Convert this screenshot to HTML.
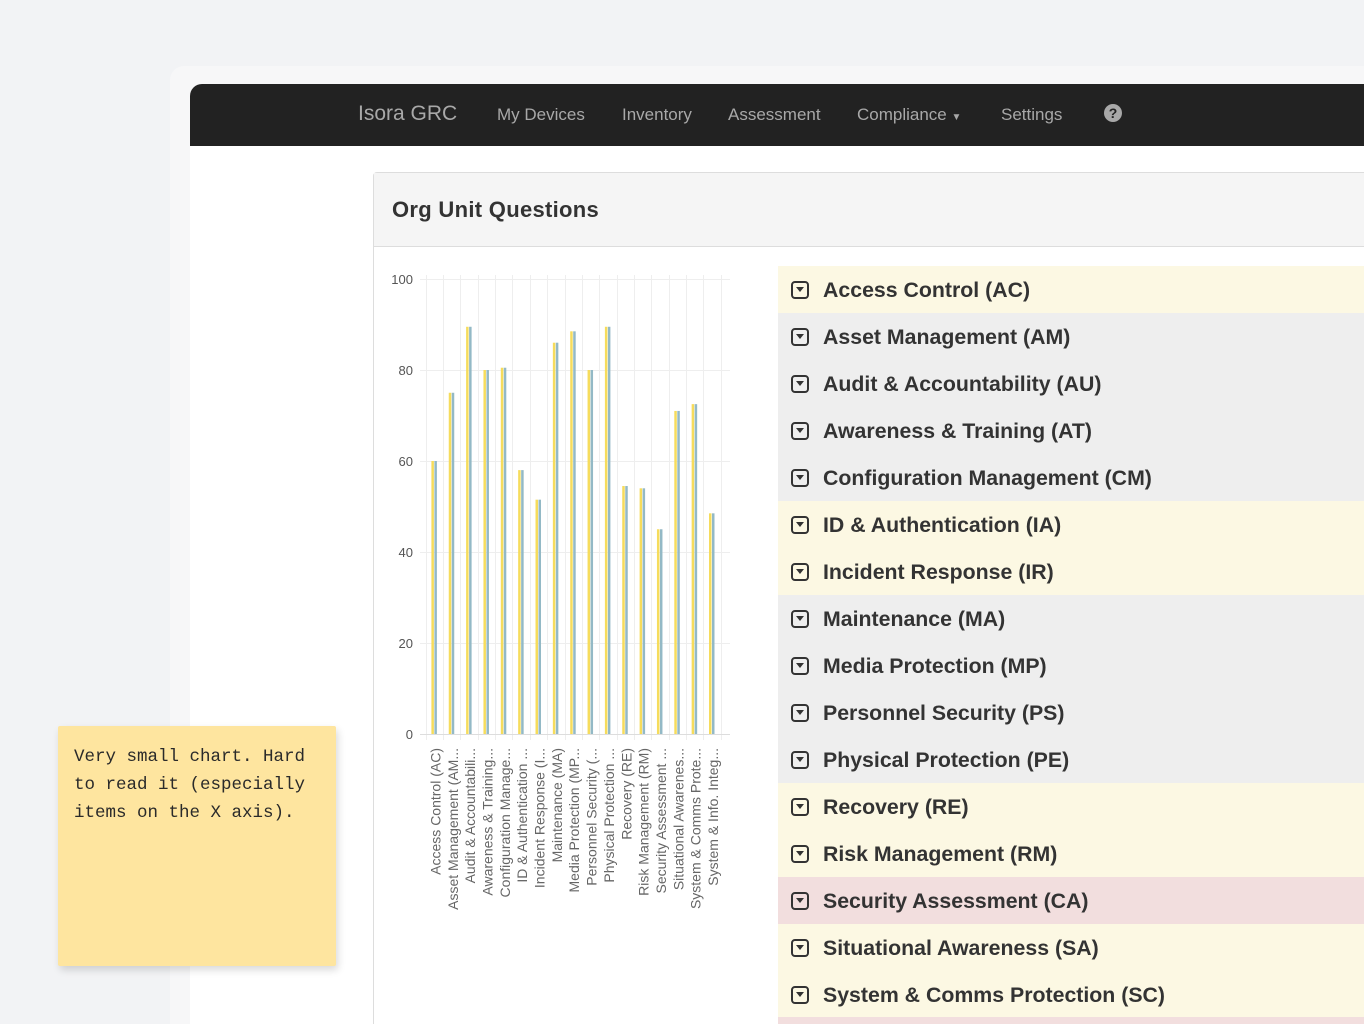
<!DOCTYPE html>
<html><head><meta charset="utf-8"><style>
*{margin:0;padding:0;box-sizing:border-box}
html,body{width:1364px;height:1024px;overflow:hidden}
body{background:#f2f3f5;font-family:"Liberation Sans",sans-serif;position:relative}
.frame{position:absolute;left:170px;top:66px;width:1194px;height:958px;background:#f7f7f8;border-radius:14px 0 0 0}
.win{position:absolute;left:190px;top:84px;width:1174px;height:940px;background:#fff;border-radius:12px 0 0 0;overflow:hidden}
.nav{position:absolute;left:0;top:0;right:0;height:62px;background:#222}
.nav span{position:absolute;top:21px;color:#a8a8a8;font-size:17px}
.panel{position:absolute;left:183px;top:88px;width:1020px;height:900px;border:1px solid #ddd;border-radius:4px 0 0 0}
.ph{height:74px;background:#f5f5f5;border-bottom:1px solid #ddd;padding:24px 0 0 18px;font-weight:bold;font-size:22px;color:#333;letter-spacing:0.3px}
.row{position:absolute;left:778px;width:600px;height:47px;font-weight:bold;font-size:21.3px;color:#333;padding:12px 0 0 45px}
.row i{position:absolute;left:13px;top:15px;width:18px;height:18px;border:2.5px solid #333;border-radius:4px}
.row i:after{content:"";position:absolute;left:3px;top:4px;border-left:4.5px solid transparent;border-right:4.5px solid transparent;border-top:5px solid #333}
.y{background:#fcf8e3}.g{background:#eee}.r{background:#f2dede}
.note{position:absolute;left:58px;top:726px;width:278px;height:240px;background:#fee59f;box-shadow:2px 4px 8px rgba(0,0,0,.15);padding:17px 16px;font-family:"Liberation Mono",monospace;font-size:17.5px;line-height:28px;color:#2a2a2a;border-radius:2px}
</style></head><body>
<div class="frame"></div>
<div class="win">
<div class="nav">
<span style="left:168px;top:18px;font-size:21px">Isora GRC</span>
<span style="left:307px">My Devices</span>
<span style="left:432px">Inventory</span>
<span style="left:538px">Assessment</span>
<span style="left:667px">Compliance <small style="font-size:10px">▼</small></span>
<span style="left:811px">Settings</span>
<span style="left:914px;top:20px;width:18px;height:18px;border-radius:50%;background:#a8a8a8;color:#222;font-size:14px;font-weight:bold;text-align:center;line-height:18px">?</span>
</div>
<div class="panel"><div class="ph">Org Unit Questions</div></div>
</div>
<svg style="position:absolute;left:0;top:0" width="1364" height="1024" font-family="Liberation Sans, sans-serif">
<g stroke="#eee" stroke-width="1" id="grid">
<line x1="420" y1="279.5" x2="730" y2="279.5"/><line x1="420" y1="370.5" x2="730" y2="370.5"/><line x1="420" y1="461.5" x2="730" y2="461.5"/><line x1="420" y1="552.5" x2="730" y2="552.5"/><line x1="420" y1="643.5" x2="730" y2="643.5"/>
</g>
<line x1="420" y1="734.5" x2="730" y2="734.5" stroke="#ddd"/>
<g font-size="13" fill="#555" text-anchor="end">
<text x="413" y="284">100</text><text x="413" y="375">80</text><text x="413" y="466">60</text><text x="413" y="557">40</text><text x="413" y="648">20</text><text x="413" y="739">0</text>
</g>
<g id="bars"></g>
<g font-size="14" fill="#666" text-anchor="end" id="labels"></g>
</svg>
<script>
var v=[60,75,89.5,80,80.5,58,51.5,86,88.5,80,89.5,54.5,54,45,71,72.5,48.5];
var L=["Access Control (AC)","Asset Management (AM...","Audit & Accountabili...","Awareness & Training...","Configuration Manage...","ID & Authentication ...","Incident Response (I...","Maintenance (MA)","Media Protection (MP...","Personnel Security (...","Physical Protection ...","Recovery (RE)","Risk Management (RM)","Security Assessment ...","Situational Awarenes...","System & Comms Prote...","System & Info. Integ..."];
var b="",l="",g="",s=17.35;
for(var i=0;i<=17;i++){var x=Math.round(425.7+s*i)+.5;g+='<line x1="'+x+'" y1="275" x2="'+x+'" y2="740"/>';}
for(var i=0;i<17;i++){var cx=434.4+s*i,h=v[i]*4.55;
b+='<rect x="'+(cx-3)+'" y="'+(734-h)+'" width="2.5" height="'+h+'" fill="#f6dc5c"/><rect x="'+(cx)+'" y="'+(734-h)+'" width="2.5" height="'+h+'" fill="#93b9c6"/>';
l+='<text transform="translate('+(cx+6)+',748) rotate(-90)">'+L[i].replace(/&/g,"&amp;")+'</text>';}
document.getElementById("grid").innerHTML+=g;
document.getElementById("bars").innerHTML=b;document.getElementById("labels").innerHTML=l;
</script>
<div class="row y" style="top:266px"><i></i>Access Control (AC)</div>
<div class="row g" style="top:313px"><i></i>Asset Management (AM)</div>
<div class="row g" style="top:360px"><i></i>Audit &amp; Accountability (AU)</div>
<div class="row g" style="top:407px"><i></i>Awareness &amp; Training (AT)</div>
<div class="row g" style="top:454px"><i></i>Configuration Management (CM)</div>
<div class="row y" style="top:501px"><i></i>ID &amp; Authentication (IA)</div>
<div class="row y" style="top:548px"><i></i>Incident Response (IR)</div>
<div class="row g" style="top:595px"><i></i>Maintenance (MA)</div>
<div class="row g" style="top:642px"><i></i>Media Protection (MP)</div>
<div class="row g" style="top:689px"><i></i>Personnel Security (PS)</div>
<div class="row g" style="top:736px"><i></i>Physical Protection (PE)</div>
<div class="row y" style="top:783px"><i></i>Recovery (RE)</div>
<div class="row y" style="top:830px"><i></i>Risk Management (RM)</div>
<div class="row r" style="top:877px"><i></i>Security Assessment (CA)</div>
<div class="row y" style="top:924px"><i></i>Situational Awareness (SA)</div>
<div class="row y" style="top:971px"><i></i>System &amp; Comms Protection (SC)</div>
<div class="row r" style="top:1017px;height:7px"></div>
<div class="note">Very small chart. Hard to read it (especially items on the X axis).</div>
</body></html>
